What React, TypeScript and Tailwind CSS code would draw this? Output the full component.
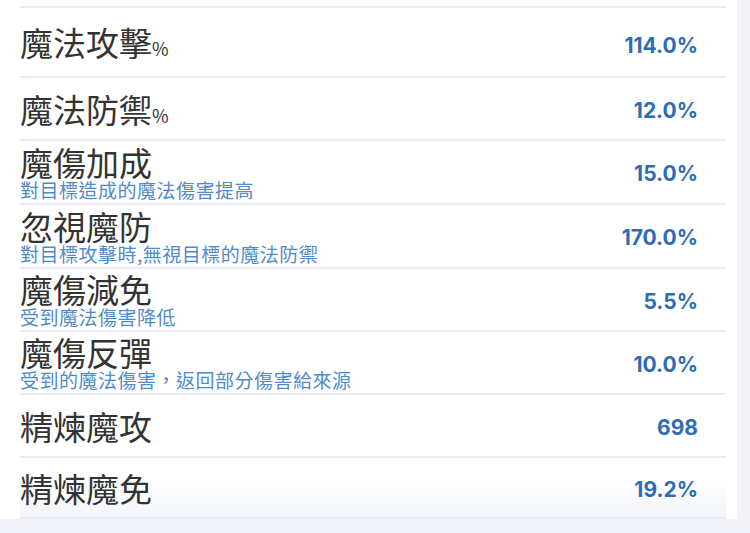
const stats = [
  { label: '魔法攻擊', pct: true, value: '114.0%', h: 'h-[70px]' },
  { label: '魔法防禦', pct: true, value: '12.0%', h: 'h-[63px]' },
  { label: '魔傷加成', desc: '對目標造成的魔法傷害提高', value: '15.0%', h: 'h-[64px]' },
  { label: '忽視魔防', desc: '對目標攻擊時,無視目標的魔法防禦', value: '170.0%', h: 'h-[64px]' },
  { label: '魔傷減免', desc: '受到魔法傷害降低', value: '5.5%', h: 'h-[63px]' },
  { label: '魔傷反彈', desc: '受到的魔法傷害，返回部分傷害給來源', value: '10.0%', h: 'h-[63px]' },
  { label: '精煉魔攻', value: '698', h: 'h-[63px]' },
  { label: '精煉魔免', value: '19.2%', h: 'h-[63px]' },
];

export default function App() {
  return (
    <div className="w-[750px] h-[533px] overflow-hidden bg-[#f1f3f8]">
      <div className="w-[737px] bg-white pt-[6px] pl-[20px] pr-[11px] font-['Noto_Sans_CJK_TC','Noto_Sans',sans-serif]">
        {stats.map((s, i) => (
          <div
            key={s.label}
            className={
              'flex items-center justify-between border-t-2 border-[#e8ebf2] pr-[28px] ' +
              s.h +
              (i === stats.length - 1
                ? ' border-b-2 bg-linear-to-b from-white from-40% to-[#f2f4f9]'
                : '')
            }
          >
            <div className="flex flex-col">
              <div className="flex items-baseline text-[33px] leading-[32px] text-[#333333]">
                <span>{s.label}</span>
                {s.pct && <span className="text-[18px] leading-none">%</span>}
              </div>
              {s.desc && (
                <div className="mt-[2px] text-[19px] leading-[19px] text-[#4f8bca] tracking-[0.5px]">
                  {s.desc}
                </div>
              )}
            </div>
            <div
              className={
                "font-['Inter',sans-serif] font-bold text-[21px] text-[#2d6db3] " +
                (i === 0 ? 'mt-[8px]' : 'mt-[4px]')
              }
            >
              {s.value}
            </div>
          </div>
        ))}
      </div>
    </div>
  );
}
